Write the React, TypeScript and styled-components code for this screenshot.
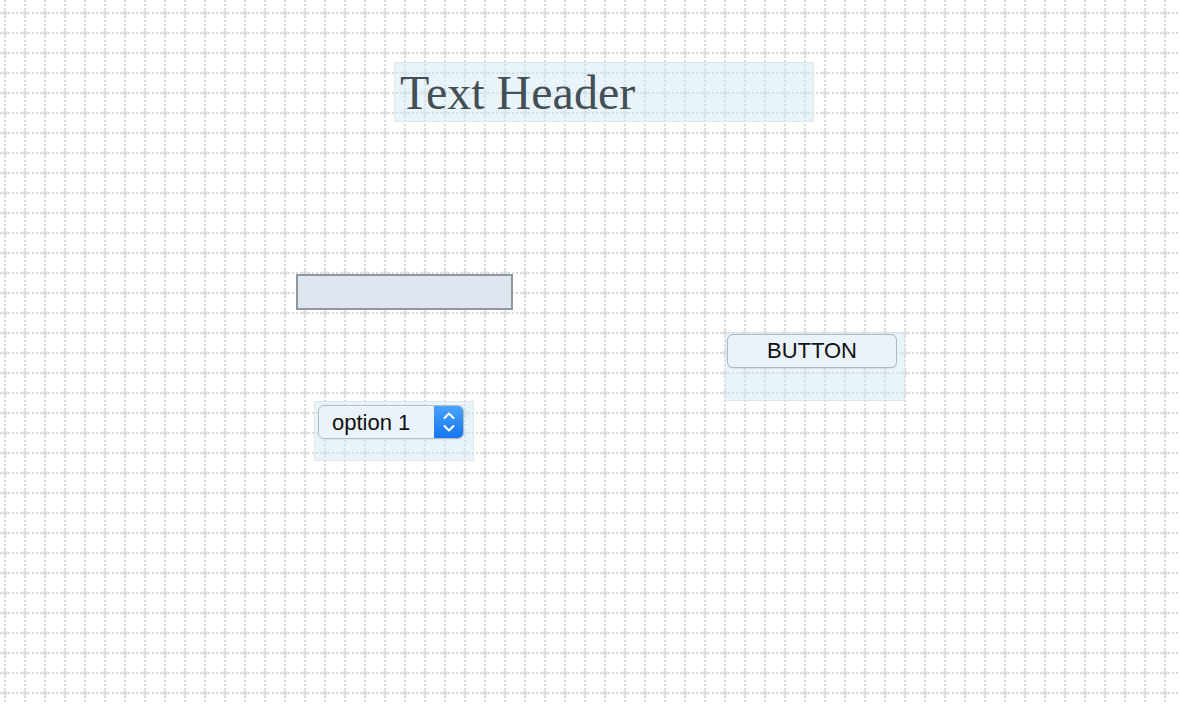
import styled, { createGlobalStyle } from "styled-components";

const GlobalStyle = createGlobalStyle`
  html, body {
    margin: 0;
    padding: 0;
    background: #ffffff;
    overflow: hidden;
  }
  * {
    box-sizing: border-box;
  }
`;

const Canvas = styled.div`
  position: relative;
  width: 1180px;
  height: 704px;
  background-image: radial-gradient(
    circle at 5px 13px,
    transparent 1.2px,
    #dedede 1.3px,
    #dedede 2.5px,
    transparent 2.6px
  );
  background-size: 20px 20px;

  &::before,
  &::after {
    content: "";
    position: absolute;
    inset: 0;
    z-index: 0;
    pointer-events: none;
  }

  /* vertical dotted lines */
  &::before {
    background-image: linear-gradient(
      to right,
      transparent 4px,
      #d9d9d9 4px,
      #d9d9d9 6px,
      transparent 6px
    );
    background-size: 20px 100%;
    -webkit-mask-image: linear-gradient(to bottom, #000 2px, transparent 2px);
    -webkit-mask-size: 100% 4px;
    mask-image: linear-gradient(to bottom, #000 2px, transparent 2px);
    mask-size: 100% 4px;
  }

  /* horizontal dotted lines */
  &::after {
    background-image: linear-gradient(
      to bottom,
      transparent 12px,
      #d9d9d9 12px,
      #d9d9d9 14px,
      transparent 14px
    );
    background-size: 100% 20px;
    -webkit-mask-image: linear-gradient(to right, #000 2px, transparent 2px);
    -webkit-mask-size: 4px 100%;
    mask-image: linear-gradient(to right, #000 2px, transparent 2px);
    mask-size: 4px 100%;
  }
`;

const Widget = styled.div<{ $x: number; $y: number; $w: number; $h: number; $pad?: number; $frame?: boolean }>`
  position: absolute;
  z-index: 1;
  left: ${(p) => p.$x}px;
  top: ${(p) => p.$y}px;
  width: ${(p) => p.$w}px;
  height: ${(p) => p.$h}px;
  background: ${(p) => (p.$frame ? "rgba(212, 234, 246, 0.5)" : "transparent")};
  border: 1px solid ${(p) => (p.$frame ? "rgba(220, 226, 230, 0.8)" : "transparent")};
  padding: ${(p) => p.$pad ?? 1}px;
`;

const Header = styled.h1`
  margin: 0;
  padding: 0 0 0 4px;
  font-family: "Liberation Serif", "Times New Roman", serif;
  font-weight: 400;
  font-size: 48px;
  line-height: 58px;
  color: #434e55;
`;

const TextField = styled.input`
  display: block;
  width: 100%;
  height: 100%;
  margin: 0;
  border: 2px solid #8d989d;
  background: #dfe5ee;
  outline: none;
  padding: 0 6px;
  font-family: "Liberation Sans", Arial, sans-serif;
  font-size: 16px;
`;

const Button = styled.button`
  display: flex;
  align-items: center;
  justify-content: center;
  width: 170px;
  height: 34px;
  margin: 0;
  padding: 0;
  border: 1px solid #aebac0;
  border-radius: 6px;
  background: #e9f3f9;
  box-shadow: 0 1px 1px rgba(0, 0, 0, 0.08);
  font-family: "Liberation Sans", Arial, sans-serif;
  font-size: 22px;
  color: #111111;
  cursor: pointer;
`;

const Select = styled.div`
  display: flex;
  width: 146px;
  height: 34px;
  border: 1px solid #b3bdc3;
  border-radius: 6px;
  background: #e9f3f9;
  overflow: hidden;
  box-shadow: 0 1px 1px rgba(0, 0, 0, 0.06);
`;

const SelectValue = styled.span`
  flex: 1;
  display: flex;
  align-items: center;
  padding: 2px 0 0 13px;
  font-family: "Liberation Sans", Arial, sans-serif;
  font-size: 22px;
  color: #111111;
`;

const SelectArrow = styled.span`
  display: flex;
  align-items: center;
  justify-content: center;
  width: 29px;
  background: linear-gradient(to bottom, #4aa3fc, #1475f2);
`;

function Stepper() {
  return (
    <svg width="12" height="22" viewBox="0 0 12 22" fill="none">
      <path d="M1.5 7 L6 2.5 L10.5 7" stroke="#fff" strokeWidth="2" strokeLinecap="round" strokeLinejoin="round" />
      <path d="M1.5 15 L6 19.5 L10.5 15" stroke="#fff" strokeWidth="2" strokeLinecap="round" strokeLinejoin="round" />
    </svg>
  );
}

export default function App() {
  return (
    <>
      <GlobalStyle />
      <Canvas>
        <Widget $x={394} $y={62} $w={420} $h={60} $frame>
          <Header>Text Header</Header>
        </Widget>

        <Widget $x={295} $y={273} $w={219} $h={38} $pad={0}>
          <TextField type="text" />
        </Widget>

        <Widget $x={725} $y={332} $w={180} $h={69} $frame>
          <Button>BUTTON</Button>
        </Widget>

        <Widget $x={314} $y={401} $w={160} $h={60} $pad={3} $frame>
          <Select>
            <SelectValue>option 1</SelectValue>
            <SelectArrow>
              <Stepper />
            </SelectArrow>
          </Select>
        </Widget>
      </Canvas>
    </>
  );
}
